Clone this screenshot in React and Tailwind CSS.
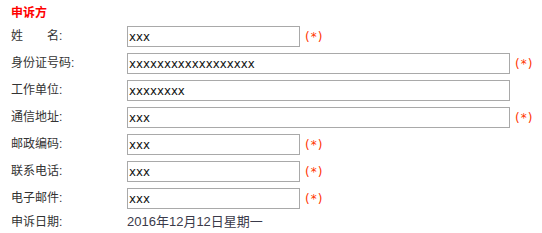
import React from "react";

const fields = [
  { label: "姓\u2003\u2003名:", value: "xxx", wide: false, required: true },
  { label: "身份证号码:", value: "xxxxxxxxxxxxxxxxxx", wide: true, required: true },
  { label: "工作单位:", value: "xxxxxxxx", wide: true, required: false },
  { label: "通信地址:", value: "xxx", wide: true, required: true },
  { label: "邮政编码:", value: "xxx", wide: false, required: true },
  { label: "联系电话:", value: "xxx", wide: false, required: true },
  { label: "电子邮件:", value: "xxx", wide: false, required: true },
];

const cjk = "font-['Liberation_Sans','Noto_Sans_CJK_SC',sans-serif]";

const App = () => {
  return (
    <div className={`w-[542px] h-[233px] bg-white pl-[11px] pt-[5px] text-[12px] text-[#333] ${cjk}`}>
      <p className="h-[16px] leading-[16px] font-bold text-[#ff0000] text-[12px]">申诉方</p>

      <div className="mt-[5px] flex flex-col gap-[6px]">
        {fields.map((item, index) => (
          <div className="flex items-center h-[21px]" key={index}>
            <p className="w-[116px] shrink-0 leading-[21px]">{item.label}</p>
            <input
              className={`h-[21px] border border-[#a9a9a9] px-[1px] text-[11.8px] text-[#111] outline-none font-['DejaVu_Sans',sans-serif] ${
                item.wide ? "w-[383px]" : "w-[173px]"
              }`}
              defaultValue={item.value}
            />
            {item.required && (
              <span className="ml-[5px] text-[#ff3300] text-[12px] tracking-[1px] font-['DejaVu_Sans',sans-serif]">(*)</span>
            )}
          </div>
        ))}
        <div className="flex items-center h-[16px] -mt-[1px]">
          <p className="w-[116px] shrink-0">申诉日期:</p>
          <p className="text-[#3a3a4a] text-[13px]">2016年12月12日星期一</p>
        </div>
      </div>
    </div>
  );
};

export default App;
